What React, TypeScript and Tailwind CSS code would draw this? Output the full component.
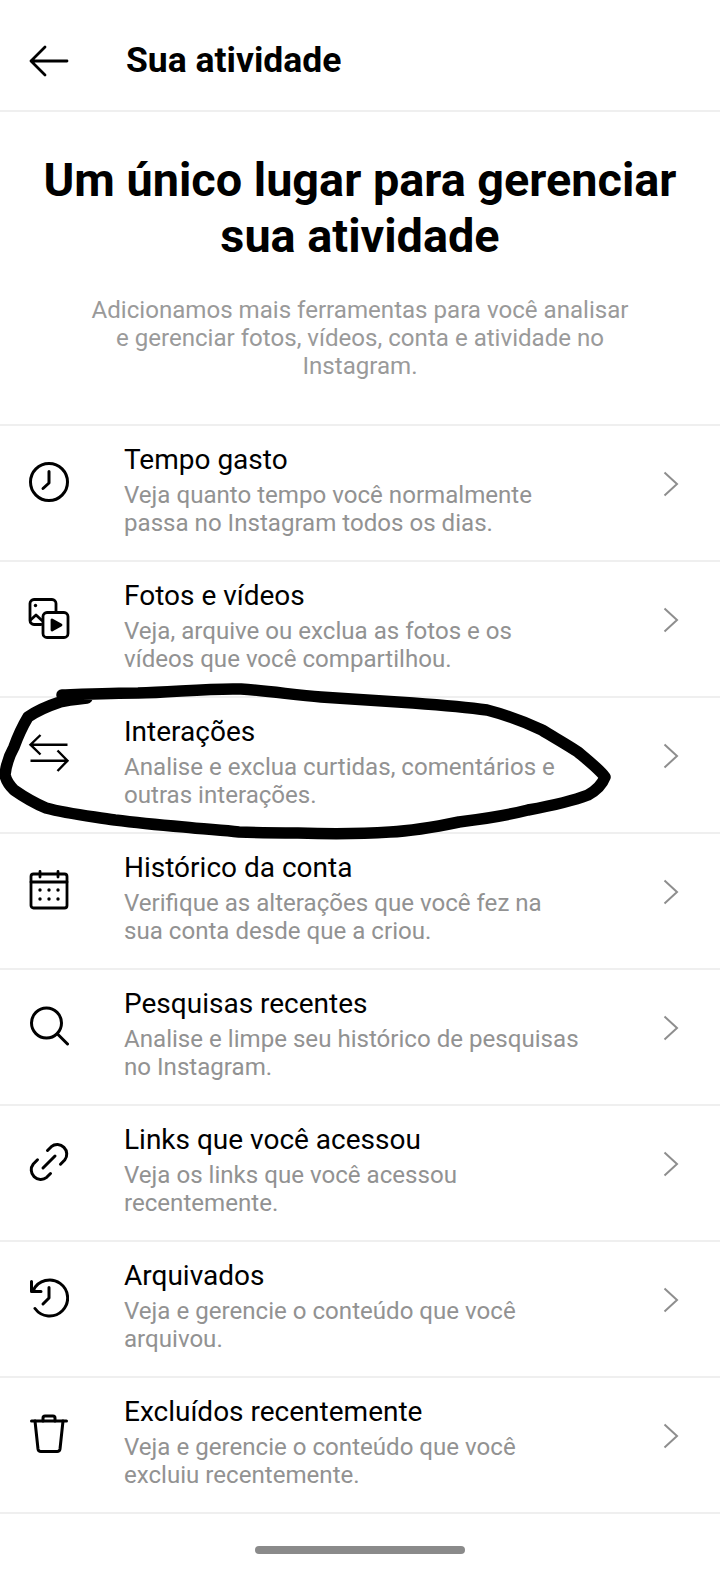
import React from 'react';

const iconProps = {
  width: 40,
  height: 40,
  viewBox: '0 0 40 40',
  fill: 'none',
  stroke: 'currentColor',
  strokeWidth: 3,
  strokeLinecap: 'round' as const,
  strokeLinejoin: 'round' as const,
};

function ClockIcon() {
  return (
    <svg {...iconProps}>
      <circle cx="20" cy="20" r="18.5" />
      <path d="M20 9.5V21l-6 5.5" />
    </svg>
  );
}

function MediaIcon() {
  return (
    <svg {...iconProps} strokeWidth={2.8} className="overflow-visible">
      <path d="M12 26.5H5a4 4 0 0 1-4-4V5.5a4 4 0 0 1 4-4h18a4 4 0 0 1 4 4V13" />
      <path d="M1.5 22 7 17l6 5.5" />
      <circle cx="6.5" cy="7.5" r="1.7" fill="currentColor" stroke="none" />
      <rect x="14" y="14.5" width="25" height="25" rx="4" />
      <path d="M23 22v10l9-5z" fill="currentColor" />
    </svg>
  );
}

function SwapIcon() {
  return (
    <svg {...iconProps} strokeWidth={2.4} strokeLinecap="butt" strokeLinejoin="miter" className="overflow-visible">
      <path d="M1.5 10.7h37M11.5 1 1.5 10.7 11.5 20.5" />
      <path d="M1.5 26.7h37M28.5 16.5 38.5 26.7 28.5 37" />
    </svg>
  );
}

function CalendarIcon() {
  return (
    <svg {...iconProps} strokeWidth={2.8}>
      <rect x="2" y="4" width="36" height="34" rx="2.5" />
      <path d="M2 12h36M11 1.5V7M29 1.5V7" />
      <g fill="currentColor" stroke="none">
        <circle cx="11" cy="20" r="1.7" />
        <circle cx="20" cy="20" r="1.7" />
        <circle cx="29" cy="20" r="1.7" />
        <circle cx="11" cy="29" r="1.7" />
        <circle cx="20" cy="29" r="1.7" />
        <circle cx="29" cy="29" r="1.7" />
      </g>
    </svg>
  );
}

function SearchIcon() {
  return (
    <svg {...iconProps}>
      <circle cx="17.5" cy="17" r="15" />
      <path d="M28.5 28 38.5 38" />
    </svg>
  );
}

function LinkIcon() {
  return (
    <svg {...iconProps}>
      <path d="M18.5 8.5 22.3 4.7A9.5 9.5 0 0 1 35.7 18L31.5 22.2" />
      <path d="M21.5 31.5 17.7 35.3A9.5 9.5 0 0 1 4.3 22L8.5 17.8" />
      <path d="M14 26 26 14" />
    </svg>
  );
}

function HistoryIcon() {
  return (
    <svg {...iconProps}>
      <path d="M4.5 12A18 18 0 1 1 6 30.5" />
      <path d="M2.5 3.5v10h9.5" />
      <path d="M20 9.5V20l-6 6" />
    </svg>
  );
}

function TrashIcon() {
  return (
    <svg {...iconProps}>
      <path d="M2.5 7h35" />
      <path d="M6 7l3 28a3 3 0 0 0 3 2.5h16a3 3 0 0 0 3-2.5l3-28" />
      <path d="M14 7V4a2 2 0 0 1 2-2h8a2 2 0 0 1 2 2v3" />
    </svg>
  );
}

const rows = [
  { title: 'Tempo gasto', desc: 'Veja quanto tempo você normalmente passa no Instagram todos os dias.', icon: <ClockIcon /> },
  { title: 'Fotos e vídeos', desc: 'Veja, arquive ou exclua as fotos e os vídeos que você compartilhou.', icon: <MediaIcon /> },
  { title: 'Interações', desc: 'Analise e exclua curtidas, comentários e outras interações.', icon: <SwapIcon /> },
  { title: 'Histórico da conta', desc: 'Verifique as alterações que você fez na sua conta desde que a criou.', icon: <CalendarIcon /> },
  { title: 'Pesquisas recentes', desc: 'Analise e limpe seu histórico de pesquisas no Instagram.', icon: <SearchIcon /> },
  { title: 'Links que você acessou', desc: 'Veja os links que você acessou recentemente.', icon: <LinkIcon /> },
  { title: 'Arquivados', desc: 'Veja e gerencie o conteúdo que você arquivou.', icon: <HistoryIcon /> },
  { title: 'Excluídos recentemente', desc: 'Veja e gerencie o conteúdo que você excluiu recentemente.', icon: <TrashIcon /> },
];

function ActivityRow({ title, desc, icon }: { title: string; desc: string; icon: React.ReactNode }) {
  return (
    <div className="flex h-[136px] border-b-2 border-[#efefef]">
      <div className="w-[124px] shrink-0 pl-[29px] pt-[36px] text-black">{icon}</div>
      <div className="w-[460px] pt-[16px]">
        <p className="text-[28px] leading-[36px] text-black">{title}</p>
        <p className="mt-[3px] text-[24.1px] leading-[28px] text-[#929292]">{desc}</p>
      </div>
      <div className="ml-auto pr-[41px] pt-[45px]">
        <svg width="16" height="26" viewBox="0 0 16 26" fill="none" stroke="#8e8e8e" strokeWidth="2">
          <path d="M1.5 1.5 14 13 1.5 24.5" />
        </svg>
      </div>
    </div>
  );
}

export default function App() {
  return (
    <div className="relative h-[1572px] w-[720px] overflow-hidden bg-white font-['Roboto',sans-serif]">
      {/* top bar */}
      <div className="flex h-[112px] items-center border-b-2 border-[#efefef] pl-[29px] pt-[8px]">
        <svg className="mt-[3px]" width="40" height="32" viewBox="0 0 40 32" fill="none" stroke="black" strokeWidth="2.8" strokeLinecap="round" strokeLinejoin="round">
          <path d="M38 16H2M16 2 2 16l14 14" />
        </svg>
        <h1 className="ml-[57px] mt-[3px] text-[35.5px] font-bold text-black">Sua atividade</h1>
      </div>

      {/* intro */}
      <div className="flex h-[314px] flex-col items-center border-b-2 border-[#efefef] pt-[40px] text-center">
        <h2 className="w-[660px] text-[46.8px] leading-[56px] font-bold text-black">Um único lugar para gerenciar sua atividade</h2>
        <p className="mt-[32px] w-[546px] text-[24.1px] leading-[28px] text-[#9a9a9a]">
          Adicionamos mais ferramentas para você analisar e gerenciar fotos, vídeos, conta e atividade no Instagram.
        </p>
      </div>

      {rows.map((r) => (
        <ActivityRow key={r.title} title={r.title} desc={r.desc} icon={r.icon} />
      ))}

      {/* home indicator */}
      <div className="mt-[32px] flex justify-center">
        <div className="h-[8px] w-[210px] rounded-full bg-[#8a8a8a]" />
      </div>

      {/* hand drawn circle over the Interações row */}
      <svg className="pointer-events-none absolute left-0 top-0" width="720" height="1572" viewBox="0 0 720 1572" fill="none">
        <path
          d="M62 695 C90 694 115 693 138 693 C175 692 210 688 241 689 C270 691 295 695 321 697 C355 699 385 701 413 703 C440 705 465 707 487 710 C510 716 525 722 542 730 C555 738 566 744 578 752 C590 762 600 770 605 777 C602 785 597 790 588 795 C570 802 550 806 528 810 C505 816 482 819 459 822 C435 827 412 831 390 832 C360 834 330 834 298 833 C278 833 258 833 239 832 C220 830 202 829 184 827 C160 825 138 823 115 820 C90 816 68 814 46 808 C34 803 24 797 14 790 C9 785 6 780 5 775 C6 765 9 756 14 747 C18 736 22 727 28 717 C38 710 48 706 60 702 C68 700 78 699 87 698"
          stroke="black"
          strokeWidth="11.5"
          strokeLinecap="round"
          strokeLinejoin="round"
        />
      </svg>
    </div>
  );
}
